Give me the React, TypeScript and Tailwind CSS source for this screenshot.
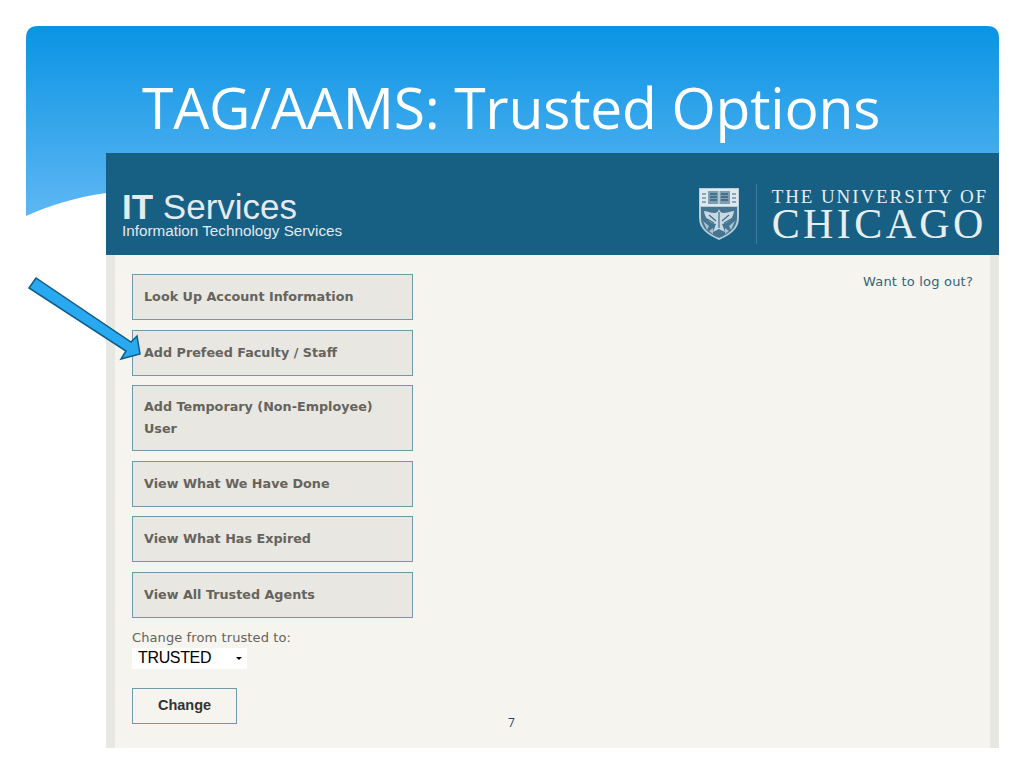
const buttons = [
  { label: 'Look Up Account Information', h: 'h-[46px]' },
  { label: 'Add Prefeed Faculty / Staff', h: 'h-[46px]' },
  { label: 'Add Temporary (Non-Employee) User', h: 'h-[66px]' },
  { label: 'View What We Have Done', h: 'h-[46px]' },
  { label: 'View What Has Expired', h: 'h-[46px]' },
  { label: 'View All Trusted Agents', h: 'h-[46px]' },
];

function Crest() {
  return (
    <svg width="40" height="52" viewBox="0 0 40 52" className="shrink-0">
      <path d="M0 0H40V30C40 41 31 47 20 52C9 47 0 41 0 30Z" fill="#b9ced9" />
      <rect x="1" y="1" width="38" height="17" fill="#dfe8ec" />
      {/* open book on the top band */}
      <rect x="9" y="3" width="22" height="13" fill="#7f9fb1" />
      <path d="M11 6H18M11 9H18M11 12H18M22 6H29M22 9H29M22 12H29" stroke="#35637d" strokeWidth="1.4" />
      <path d="M20 3V16" stroke="#e8eff2" />
      <path d="M3 6H7M3 10H7M3 14H7M33 6H37M33 10H37M33 14H37" stroke="#6d93a8" strokeWidth="1.6" />
      {/* shield field */}
      <path d="M2 19H38V30C38 40 30 46 20 50C10 46 2 40 2 30Z" fill="#457590" />
      <path d="M20 21C18 28 12 24 5 23C6 31 11 35 17 36L14 44L20 41L26 44L23 36C29 35 34 31 35 23C28 24 22 28 20 21Z" fill="#c9d9e1" />
      <path d="M20 24V40M10 27L17 33M30 27L23 33M8 31L15 35M32 31L25 35" stroke="#3f6f8b" strokeWidth="1.2" />
      <path d="M4 33L10 38L8 42ZM36 33L30 38L32 42ZM10 43L14 40L14 46ZM30 43L26 40L26 46Z" fill="#a9c2cf" />
    </svg>
  );
}

function Arrow() {
  return (
    <svg width="120" height="90" viewBox="0 0 120 90" className="absolute left-[25px] top-[275px]">
      <polygon points="4,13 11,3 106,67 112,61 115,79 96,84 101,76" fill="#29a9f0" stroke="#0f5d86" strokeWidth="1.5" />
    </svg>
  );
}

export default function App() {
  return (
    <div className="relative w-[1024px] h-[768px] overflow-hidden bg-white pt-[26px]">
      <svg width="973" height="191" viewBox="0 0 973 191" className="absolute left-[26px] top-[26px]">
        <defs>
          <linearGradient id="sky" x1="0" y1="0" x2="0" y2="1">
            <stop offset="0" stopColor="#0a94e4" />
            <stop offset="1" stopColor="#5fb7f3" />
          </linearGradient>
        </defs>
        <path d="M0 12Q0 0 12 0H961Q973 0 973 12V191H80V167C50 171 25 179 0 190Z" fill="url(#sky)" />
      </svg>

      <div className="relative h-[127px] pl-[142px] pt-[45px]">
        <h1 className="text-[57px] leading-[72px] tracking-[-0.2px] text-white font-['Open_Sans',sans-serif]">TAG/AAMS: Trusted Options</h1>
      </div>

      <div className="relative ml-[106px] w-[893px]">
        <header className="flex h-[102px] items-center justify-between bg-[#175f83] pl-[16px] pr-[11px] pt-[20px]">
          <div className="font-['Liberation_Sans',sans-serif] text-[#e2eaf2]">
            <div className="text-[35px] leading-[33px]"><b>IT</b> Services</div>
            <div className="text-[15.25px] leading-[16px]">Information Technology Services</div>
          </div>
          <div className="flex items-center font-['Liberation_Serif',serif] text-[#e6eef2]">
            <Crest />
            <div className="ml-[17px] h-[60px] w-px bg-[#3d7a99]" />
            <div className="ml-[15px]">
              <div className="text-[19px] leading-[19px] tracking-[1.9px] whitespace-nowrap">THE UNIVERSITY OF</div>
              <div className="text-[42px] leading-[36px] tracking-[3.4px]">CHICAGO</div>
            </div>
          </div>
        </header>

        <main className="flex h-[493px] justify-between border-x-[9px] border-x-[#e8e8e2] bg-[#f5f4ee] pl-[17px] pr-[17px] pt-[19px] font-['DejaVu_Sans',sans-serif]">
          <div className="w-[281px]">
            <div className="flex flex-col gap-[9.5px]">
              {buttons.map((b) => (
                <div key={b.label} className={`flex ${b.h} items-center border border-[#6f98a8] bg-[#e8e7e1] px-[11px] text-[12.75px] leading-[22px] font-bold text-[#66635d]`}>
                  <span>{b.label}</span>
                </div>
              ))}
            </div>
            <div className="mt-[12px] text-[13px] leading-[16px] tracking-[0.1px] text-[#66635d]">Change from trusted to:</div>
            <div className="mt-[2px] flex h-[21px] w-[115px] items-center justify-between bg-white pl-[6px] pr-[5px] font-['Liberation_Sans',sans-serif] text-[16px] tracking-[-0.35px] text-black">
              <span>TRUSTED</span>
              <span className="h-0 w-0 border-x-[3px] border-t-[3px] border-x-transparent border-t-black" />
            </div>
            <div className="mt-[19px] flex h-[36px] w-[105px] items-center justify-center border border-[#6f98a8] font-['Liberation_Sans',sans-serif] text-[14.5px] font-bold text-[#333333]">Change</div>
          </div>
          <div className="text-[13px] leading-[16px] tracking-[0.2px] text-[#336480]">Want to log out?</div>
        </main>

        <div className="absolute left-[402px] top-[561px] font-['Open_Sans',sans-serif] text-[12px] text-[#2a3f7a]">7</div>
      </div>

      <Arrow />
    </div>
  );
}
